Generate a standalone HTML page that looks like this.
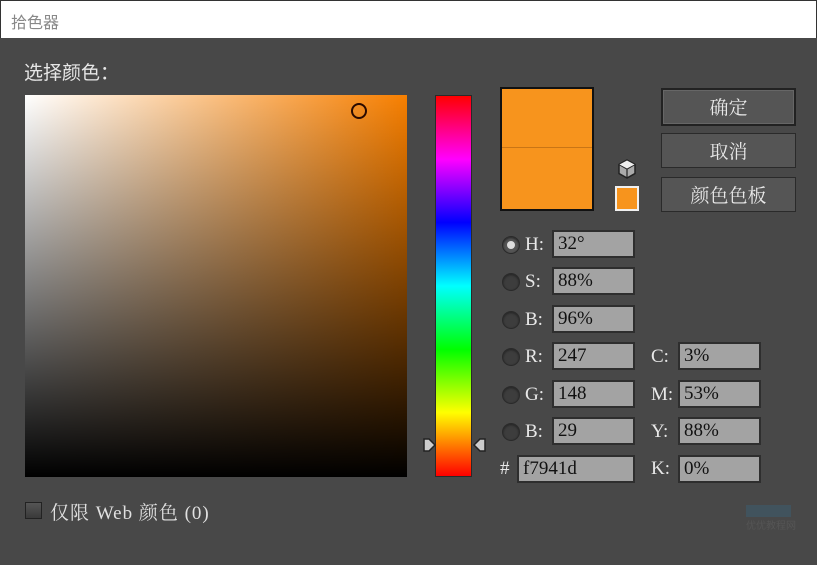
<!DOCTYPE html>
<html><head><meta charset="utf-8"><style>
*{margin:0;padding:0;box-sizing:border-box}
body{width:817px;height:565px;background:#484848;position:relative;overflow:hidden;font-family:"Liberation Serif","Noto Serif CJK SC",serif;color:#ddd}
.a{position:absolute}
#title{left:0;top:0;width:817px;height:38px;background:#fff;border-top:1px solid #333;border-left:1px solid #333;border-right:1px solid #333;font-family:"Liberation Sans","Noto Sans CJK SC",sans-serif;font-size:16px;color:#888;padding:8px 0 0 10px}
.inp{position:absolute;height:28px;background:#a3a3a3;border:2px solid #2e2e2e;color:#111;font-size:19px;padding:0 0 0 4px;line-height:23px}
.lbl{position:absolute;font-size:19px;color:#e8e8e8}
.rad{position:absolute;width:18px;height:18px;border-radius:50%;background:#3d3d3d;border:1px solid #2a2a2a;box-shadow:inset 0 1px 2px #222}
.btn{position:absolute;left:661px;width:135px;background:#555;border:1px solid #2a2a2a;color:#e8e8e8;font-size:19px;text-align:center;font-family:"Noto Serif CJK SC",serif}
</style></head><body>
<div id="title" class="a">拾色器</div>
<div class="a" style="left:24px;top:58px;font-size:19px;font-family:'Noto Sans CJK SC',sans-serif;color:#e6e6e6">选择颜色：</div>
<div class="a" style="left:25px;top:95px;width:382px;height:382px;background:linear-gradient(to bottom,rgba(0,0,0,0),#000),linear-gradient(to right,#fff,#f77f00)"></div>
<div class="a" style="left:351px;top:103px;width:16px;height:16px;border-radius:50%;border:2px solid #2a0a00"></div>
<div class="a" style="left:435px;top:95px;width:37px;height:382px;border:1px solid #2a2a2a;background:linear-gradient(to bottom,#f00,#f0f 16.7%,#00f 33.3%,#0ff 50%,#0f0 66.7%,#ff0 83.3%,#f00)"></div>
<svg class="a" style="left:422px;top:437px" width="66" height="16"><path d="M2 2h5l6 6-6 6H2z" fill="#ccc" stroke="#222" stroke-width="1.5"/><path d="M63 2h-5l-6 6 6 6h5z" fill="#ccc" stroke="#222" stroke-width="1.5"/></svg>
<div class="a" style="left:500px;top:87px;width:94px;height:124px;background:#f7941d;border:2px solid #111"></div>
<div class="a" style="left:502px;top:147px;width:90px;height:1px;background:#c97515"></div>
<svg class="a" style="left:616px;top:158px" width="22" height="22"><path d="M11 2l8 4.5v9L11 20l-8-4.5v-9z" fill="#aaa" stroke="#222" stroke-width="1.5"/><path d="M3 6.5l8 4.5 8-4.5M11 11v9" fill="none" stroke="#222" stroke-width="1.2"/><path d="M3.5 6.5L11 2.5l7.5 4L11 10.5z" fill="#eee"/></svg>
<div class="a" style="left:615px;top:186px;width:24px;height:25px;background:#f7941d;border:2px solid #f0f0f0"></div>
<div class="btn" style="top:88px;height:38px;line-height:34px;border:2px solid #222;box-shadow:inset 0 0 0 1px #666">确定</div>
<div class="btn" style="top:133px;height:35px;line-height:33px">取消</div>
<div class="btn" style="top:177px;height:35px;line-height:33px">颜色色板</div>

<div class="rad" style="left:502px;top:236px;background:#555"><div style="position:absolute;left:4px;top:4px;width:8px;height:8px;border-radius:50%;background:#ddd"></div></div>
<div class="rad" style="left:502px;top:273px"></div>
<div class="rad" style="left:502px;top:311px"></div>
<div class="rad" style="left:502px;top:348px"></div>
<div class="rad" style="left:502px;top:386px"></div>
<div class="rad" style="left:502px;top:423px"></div>
<div class="lbl" style="left:525px;top:234px">H:</div>
<div class="lbl" style="left:525px;top:271px">S:</div>
<div class="lbl" style="left:525px;top:309px">B:</div>
<div class="lbl" style="left:525px;top:346px">R:</div>
<div class="lbl" style="left:525px;top:384px">G:</div>
<div class="lbl" style="left:525px;top:421px">B:</div>
<div class="lbl" style="left:500px;top:458px">#</div>
<div class="inp" style="left:552px;top:230px;width:83px">32°</div>
<div class="inp" style="left:552px;top:267px;width:83px">88%</div>
<div class="inp" style="left:552px;top:305px;width:83px">96%</div>
<div class="inp" style="left:552px;top:342px;width:83px">247</div>
<div class="inp" style="left:552px;top:380px;width:83px">148</div>
<div class="inp" style="left:552px;top:417px;width:83px">29</div>
<div class="inp" style="left:517px;top:455px;width:118px">f7941d</div>
<div class="lbl" style="left:651px;top:346px">C:</div>
<div class="lbl" style="left:651px;top:384px">M:</div>
<div class="lbl" style="left:651px;top:421px">Y:</div>
<div class="lbl" style="left:651px;top:458px">K:</div>
<div class="inp" style="left:678px;top:342px;width:83px">3%</div>
<div class="inp" style="left:678px;top:380px;width:83px">53%</div>
<div class="inp" style="left:678px;top:417px;width:83px">88%</div>
<div class="inp" style="left:678px;top:455px;width:83px">0%</div>

<div class="a" style="left:25px;top:502px;width:17px;height:17px;border:1px solid #222;background:linear-gradient(#555,#3a3a3a)"></div>
<div class="a" style="left:50px;top:498px;font-size:19px;color:#e0e0e0;letter-spacing:1px">仅限 Web 颜色 (0)</div>
<div class="a" style="left:746px;top:505px;width:45px;height:12px;background:#3e5866;opacity:.7"></div>
<div class="a" style="left:746px;top:517px;font-size:10px;color:#555;font-family:'Noto Sans CJK SC',sans-serif">优优教程网</div>
</body></html>
